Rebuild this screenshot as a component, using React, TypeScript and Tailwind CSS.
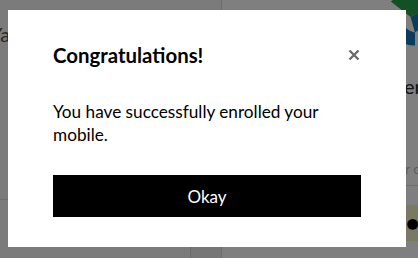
import React from "react";

export default function App() {
  return (
    <div
      className="relative w-[418px] h-[258px] overflow-hidden bg-white"
      style={{ fontFamily: "Lato, 'Open Sans', sans-serif" }}
    >
      {/* underlying page */}
      <div className="flex h-full">
        <div className="w-[222px] h-full flex flex-col bg-[#f6f6f6] border-r border-[#d8d8d8]">
          <div className="h-[200px] border-b border-[#dcdcdc] pt-[22px] pl-0 text-[20px] text-[#555] leading-[24px] -ml-[10px]">
            Ya
          </div>
          <div className="flex-1 flex justify-end">
            <div className="w-[31px] bg-[#ececec] border-l border-[#d0d0d0]" />
          </div>
        </div>
        <div className="flex-1 relative bg-white">
          <svg className="absolute right-[-30px] top-[-16px]" width="66" height="66" viewBox="0 0 60 60">
            <path d="M30 4 A26 26 0 0 1 56 30 L44 30 A14 14 0 0 0 30 16 Z" fill="#1f9a3c" />
            <path d="M8 16 L24 3 L40 22 L26 30 Z" fill="#27a046" />
            <path d="M4 30 A26 26 0 0 0 30 56 L30 44 A14 14 0 0 1 18 30 Z" fill="#1578b8" />
            <path d="M26 30 L40 22 L44 34 L30 44 Z" fill="#1578b8" />
          </svg>
          <div className="absolute left-[170px] top-[74px] text-[20px] text-[#222] leading-[24px] whitespace-nowrap">
            Ver
          </div>
          <div className="absolute left-[175px] top-[158px] text-[14px] text-[#bbb] whitespace-nowrap">
            or c
          </div>
          <div className="absolute left-0 right-0 top-[185px] border-t border-[#d8d8d8]" />
          <div className="absolute left-[160px] right-0 top-[205px] h-[36px] bg-[#f4f4c8] rounded-l-[6px] flex items-center pl-[24px] text-[22px] text-black leading-none tracking-[-2px]">
            ●●●
          </div>
        </div>
      </div>

      {/* overlay */}
      <div className="absolute inset-0 bg-black/50" />

      {/* modal */}
      <div className="absolute left-[8px] top-[10px] w-[398px] h-[237px] bg-white px-[45px] pt-[33px] pb-[30px] flex flex-col">
        <div className="flex items-start justify-between">
          <h2 className="text-[20.4px] leading-[24px] font-bold text-black">Congratulations!</h2>
          <button className="mt-[6px] mr-[1px] w-[12px] h-[12px] flex items-center justify-center" aria-label="Close">
            <svg width="12" height="12" viewBox="0 0 12 12">
              <path d="M1.5 1.5 L10.5 10.5 M10.5 1.5 L1.5 10.5" stroke="#6b6b6b" strokeWidth="2.4" strokeLinecap="butt" />
            </svg>
          </button>
        </div>
        <p className="mt-[33px] text-[17.2px] leading-[23px] text-black pr-[40px]">
          You have successfully enrolled your mobile.
        </p>
        <button className="mt-[29px] h-[42px] w-full bg-black text-white text-[17px] leading-none">
          Okay
        </button>
      </div>
    </div>
  );
}
